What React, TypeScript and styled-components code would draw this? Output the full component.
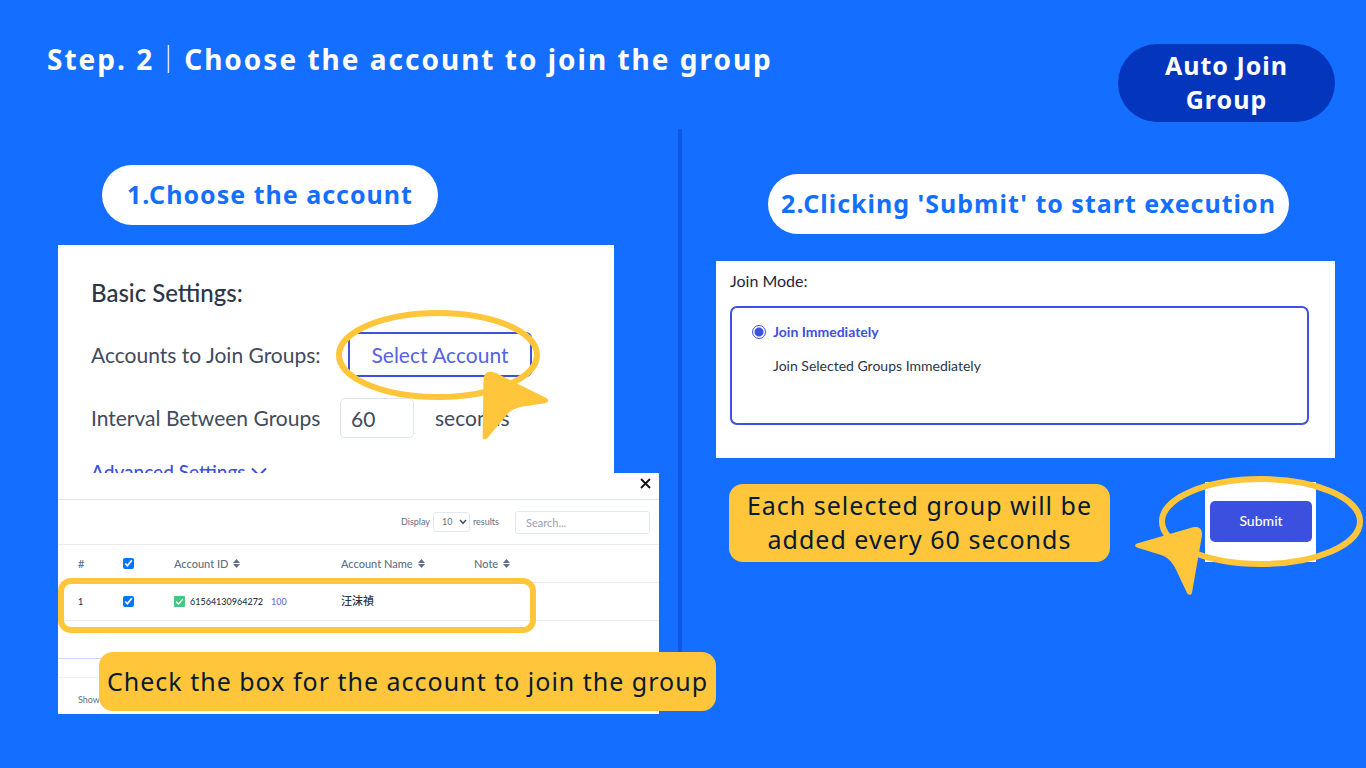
import React from "react";
import styled, { createGlobalStyle } from "styled-components";

const color = {
  page: "#146eff",
  badge: "#0435bd",
  divider: "#0c57e6",
  accent: "#ffc63c",
  ink: "#061a30",
  indigo: "#3d50df",
  text: "#2b3648",
  soft: "#414b5c",
  muted: "#5f6f86",
  line: "#e3e9f0",
};

const display = `"Noto Sans", "Noto Sans CJK SC", sans-serif`;
const ui = `Lato, "Noto Sans CJK TC", sans-serif`;

const GlobalStyle = createGlobalStyle`
  *, *::before, *::after { box-sizing: border-box; }
  body { margin: 0; background: ${color.page}; font-family: ${ui}; color: ${color.text}; }
  h1, h2, p { margin: 0; }
  button, input, select { font: inherit; color: inherit; margin: 0; }
`;

const Page = styled.div`
  min-height: 100vh;
  display: flex;
  flex-direction: column;
  overflow: hidden;
`;

const Header = styled.header`
  display: flex;
  justify-content: space-between;
  align-items: flex-start;
  padding: 44px 31px 0 47px;
`;

const Title = styled.h1`
  font: 700 28px/30px ${display};
  letter-spacing: 2px;
  color: #fff;
`;

const TitleBar = styled.span`
  font-weight: 300;
`;

const Badge = styled.div`
  width: 217px;
  padding: 4px 40px 6px;
  border-radius: 39px;
  background: ${color.badge};
  color: #fff;
  font: 700 25px/34px ${display};
  letter-spacing: 1px;
  text-align: center;
`;

const Columns = styled.main`
  flex: 1;
  display: grid;
  grid-template-columns: 678fr 4px 684fr;
  margin-top: 7px;
`;

const Divider = styled.div`
  background: ${color.divider};
  margin-bottom: 64px;
`;

const LeftColumn = styled.section`
  min-width: 0;
  padding: 36px 19px 54px 58px;
`;

const RightColumn = styled.section`
  min-width: 0;
  padding: 45px 31px 54px 34px;
`;

const Pill = styled.h2<{ $indent: number; $width: number }>`
  display: flex;
  align-items: center;
  justify-content: center;
  width: ${(p) => p.$width}px;
  height: 60px;
  margin-left: ${(p) => p.$indent}px;
  padding-bottom: 2px;
  border-radius: 30px;
  background: #fff;
  color: ${color.page};
  font: 700 25px/34px ${display};
  letter-spacing: 1px;
  white-space: nowrap;
`;

const Callout = styled.p`
  border-radius: 14px;
  background: ${color.accent};
  color: ${color.ink};
  font: 400 25px/34px ${display};
  letter-spacing: 1px;
  text-align: center;
`;

const SettingsCard = styled.div`
  height: 228px;
  margin: 20px 45px 0 0;
  padding: 32px 33px 0;
  overflow: hidden;
  background: #fff;
  color: ${color.soft};
  font-size: 21px;
  line-height: 32px;
`;

const CardHeading = styled.h2`
  color: ${color.text};
  font-size: 24px;
  line-height: 32px;
  font-weight: 500;
`;

const SettingRow = styled.div<{ $top: number; $label: number }>`
  display: flex;
  align-items: center;
  margin-top: ${(p) => p.$top}px;

  & > :first-child {
    flex: 0 0 ${(p) => p.$label}px;
    white-space: nowrap;
  }
`;

const SelectWrap = styled.div`
  position: relative;
`;

const SelectButton = styled.button`
  width: 184px;
  height: 45px;
  padding: 0;
  border: 2px solid ${color.indigo};
  border-radius: 6px;
  background: #fff;
  color: #5563e3;
`;

const Ring = styled.svg`
  position: absolute;
  fill: none;
  stroke: ${color.accent};
  stroke-width: 6;
  pointer-events: none;
`;

const SelectRing = styled(Ring)`
  left: -12px;
  top: -22px;
`;

const SubmitRing = styled(Ring)`
  left: -46px;
  top: -6px;
`;

const Pointer = styled.svg`
  position: absolute;
  fill: ${color.accent};
  pointer-events: none;
  z-index: 2;
`;

const SelectPointer = styled(Pointer)`
  left: 134px;
  top: 39px;
`;

const SubmitPointer = styled(Pointer)`
  left: -70px;
  top: 44px;
`;

const IntervalInput = styled.input`
  width: 74px;
  height: 40px;
  margin: 0 21px 0 0;
  padding: 0 10px;
  border: 1px solid #dde4ee;
  border-radius: 5px;
`;

const AdvancedLink = styled.a`
  display: flex;
  align-items: center;
  gap: 5px;
  margin-top: 18px;
  color: ${color.indigo};
  font-size: 19px;
  font-weight: 500;
  text-decoration: none;
`;

const AccountsCard = styled.div`
  position: relative;
  height: 241px;
  background: #fff;
  color: ${color.muted};
  font-size: 11px;
  line-height: 16px;
`;

const CloseBar = styled.div`
  display: flex;
  justify-content: flex-end;
  align-items: flex-start;
  height: 27px;
  padding: 4px 7px 0;
  border-bottom: 1px solid #d9e4ee;
`;

const CloseButton = styled.button`
  display: flex;
  padding: 0;
  border: 0;
  background: none;
  color: #111;
`;

const Toolbar = styled.div`
  display: flex;
  justify-content: flex-end;
  align-items: center;
  height: 44px;
  padding: 0 9px 0 0;
  font-size: 9px;
`;

const LengthLabel = styled.label`
  display: flex;
  align-items: center;
  gap: 3px;
`;

const LengthBox = styled.span`
  position: relative;
  display: flex;
  align-items: center;

  svg {
    position: absolute;
    right: 3px;
    pointer-events: none;
  }
`;

const LengthSelect = styled.select`
  appearance: none;
  width: 37px;
  height: 20px;
  padding: 0 8px;
  border: 1px solid ${color.line};
  border-radius: 3px;
  background: #fff;
`;

const SearchInput = styled.input`
  width: 135px;
  height: 23px;
  margin-left: 16px;
  padding: 0 10px;
  border: 1px solid ${color.line};
  border-radius: 3px;
  font-size: 11px;

  &::placeholder { color: #98a3b3; opacity: 1; }
`;

const AccountsTable = styled.table`
  width: 100%;
  border-collapse: collapse;
  table-layout: fixed;

  th, td {
    height: 38px;
    padding: 0;
    border-top: 1px solid #e9edf2;
    text-align: left;
    vertical-align: middle;
    font-weight: 500;
    white-space: nowrap;
  }
  th:first-child, td:first-child { padding-left: 20px; }
  td { font-size: 9px; color: ${color.text}; }
  tbody tr:last-child td { border-bottom: 1px solid #e9edf2; }
`;

const Col = styled.col<{ $width: number }>`
  width: ${(p) => p.$width}px;
`;

const CheckBox = styled.input`
  display: block;
  width: 11px;
  height: 11px;
  accent-color: #0075ff;
`;

const CellInner = styled.span`
  display: flex;
  align-items: center;
  gap: 5px;
`;

const AccountCount = styled.a`
  margin-left: 3px;
  color: #6672ea;
  text-decoration: none;
`;

const AccountName = styled.span`
  font-size: 11px;
`;

const TableFooter = styled.div`
  height: 20px;
  margin-top: 37px;
  border-top: 1px solid #c9dcf8;
  border-bottom: 1px solid #eef1f5;
`;

const Summary = styled.p`
  padding: 14px 20px 0;
  font-size: 9px;
`;

const RowHighlight = styled.div`
  position: absolute;
  left: 0;
  top: 105px;
  width: 478px;
  height: 55px;
  border: 6px solid ${color.accent};
  border-radius: 13px;
  pointer-events: none;
`;

const TableCallout = styled(Callout)`
  position: absolute;
  left: 41px;
  top: 179px;
  width: 617px;
  padding: 12px 0 13px;
  white-space: nowrap;
  z-index: 2;
`;

const ModeCard = styled.fieldset`
  min-width: 0;
  height: 197px;
  margin: 27px 0 0;
  padding: 10px 26px 0 14px;
  border: 0;
  background: #fff;
`;

const ModeLegend = styled.legend`
  float: left;
  width: 100%;
  padding: 0;
  color: #1d2838;
  font-size: 16px;
  line-height: 20px;
`;

const ModeOption = styled.div`
  display: grid;
  grid-template-columns: 21px 1fr;
  align-content: start;
  align-items: center;
  row-gap: 14px;
  width: 100%;
  height: 119px;
  margin-top: 15px;
  float: left;
  padding: 14px 20px;
  border: 2px solid ${color.indigo};
  border-radius: 7px;
  font-size: 14px;
  line-height: 20px;

  label { color: ${color.indigo}; font-weight: 700; }
  p { grid-column: 2; }
`;

const Radio = styled.input`
  appearance: none;
  width: 14px;
  height: 14px;
  border: 1px solid ${color.indigo};
  border-radius: 50%;
  background: radial-gradient(circle, ${color.indigo} 4px, #fff 5px);
`;

const SubmitRow = styled.div`
  display: flex;
  align-items: flex-end;
  justify-content: space-between;
  margin-top: 24px;
  padding: 0 19px 0 13px;
`;

const RowCallout = styled(Callout)`
  width: 381px;
  padding: 4px 10px 6px;
`;

const SubmitCard = styled.div`
  position: relative;
  width: 111px;
  height: 80px;
  padding: 19px 4px 0 5px;
  background: #fff;
`;

const SubmitButton = styled.button`
  width: 100%;
  height: 41px;
  padding: 0 0 2px;
  border: 0;
  border-radius: 5px;
  background: #3b50de;
  color: #fff;
  font-size: 14px;
  font-weight: 500;
`;

const SortIcon = () => (
  <svg width="7" height="9" viewBox="0 0 7 9" fill="currentColor" aria-hidden="true">
    <path d="M3.5 0 7 3.900H0Z M3.500 9 0 5.100H7Z" />
  </svg>
);

const VerifiedIcon = () => (
  <svg width="11" height="11" viewBox="0 0 11 11" aria-hidden="true">
    <rect width="11" height="11" rx="1" fill="#42c882" />
    <path d="M2.2 5.7 4.5 8 8.9 3.1" fill="none" stroke="#fff" strokeWidth="1.4" />
  </svg>
);

const columns = ["Account ID", "Account Name", "Note"];

export default function App() {
  return (
    <>
      <GlobalStyle />
      <Page>
        <Header>
          <Title>
            Step. 2<TitleBar>｜</TitleBar>Choose the account to join the group
          </Title>
          <Badge>Auto Join Group</Badge>
        </Header>

        <Columns>
          <LeftColumn>
            <Pill $indent={44} $width={336}>1.Choose the account</Pill>

            <SettingsCard>
              <CardHeading>Basic Settings:</CardHeading>
              <SettingRow $top={23} $label={257}>
                <span>Accounts to Join Groups:</span>
                <SelectWrap>
                  <SelectButton type="button">Select Account</SelectButton>
                  <SelectRing width="204" height="91" viewBox="0 0 204 91">
                    <ellipse cx="102" cy="45" rx="99" ry="42" />
                  </SelectRing>
                  <SelectPointer width="68" height="70" viewBox="0 0 68 70">
                    <path d="M1.5 9C1.5 1.5 7-1.5 14.7 2.3L63 26.3C67.500 28.500 67 31.500 63 32.200L41 35.500C34 37 29 38.500 24.700 44L5.500 67C3.500 69.500 0.500 68.500 0.600 65Z" />
                  </SelectPointer>
                </SelectWrap>
              </SettingRow>
              <SettingRow $top={21} $label={249}>
                <label htmlFor="interval">Interval Between Groups</label>
                <IntervalInput id="interval" defaultValue="60" />
                <span>seconds</span>
              </SettingRow>
              <AdvancedLink href="#advanced">
                Advanced Settings
                <svg width="16" height="10" viewBox="0 0 16 10" fill="none" stroke="currentColor" strokeWidth="2">
                  <path d="M1 1.500 8 8.500 15 1.500" />
                </svg>
              </AdvancedLink>
            </SettingsCard>

            <AccountsCard>
              <CloseBar>
                <CloseButton type="button" aria-label="Close">
                  <svg width="13" height="13" viewBox="0 0 13 13" fill="none" stroke="currentColor" strokeWidth="1.8">
                    <path d="M2 2 11 11M11 2 2 11" />
                  </svg>
                </CloseButton>
              </CloseBar>
              <Toolbar>
                <LengthLabel>
                  Display
                  <LengthBox>
                    <LengthSelect defaultValue="10">
                      <option>10</option>
                    </LengthSelect>
                    <svg width="8" height="6" viewBox="0 0 8 6" fill="none" stroke="#46546a" strokeWidth="1.5">
                      <path d="M1 1 4 4.300 7 1" />
                    </svg>
                  </LengthBox>
                  results
                </LengthLabel>
                <SearchInput type="search" placeholder="Search..." aria-label="Search" />
              </Toolbar>
              <AccountsTable>
                <colgroup>
                  <Col $width={65} />
                  <Col $width={51} />
                  <Col $width={167} />
                  <Col $width={133} />
                  <col />
                </colgroup>
                <thead>
                  <tr>
                    <th>#</th>
                    <th><CheckBox type="checkbox" defaultChecked aria-label="Select all" /></th>
                    {columns.map((name) => (
                      <th key={name}>
                        <CellInner>{name}<SortIcon /></CellInner>
                      </th>
                    ))}
                  </tr>
                </thead>
                <tbody>
                  <tr>
                    <td>1</td>
                    <td><CheckBox type="checkbox" defaultChecked aria-label="Select account 1" /></td>
                    <td>
                      <CellInner>
                        <VerifiedIcon />
                        61564130964272
                        <AccountCount href="#friends">100</AccountCount>
                      </CellInner>
                    </td>
                    <td><AccountName>汪沫禎</AccountName></td>
                    <td />
                  </tr>
                </tbody>
              </AccountsTable>
              <TableFooter />
              <Summary>Show</Summary>
              <RowHighlight />
              <TableCallout>Check the box for the account to join the group</TableCallout>
            </AccountsCard>
          </LeftColumn>

          <Divider />

          <RightColumn>
            <Pill $indent={52} $width={521}>2.Clicking 'Submit' to start execution</Pill>

            <ModeCard>
              <ModeLegend>Join Mode:</ModeLegend>
              <ModeOption>
                <Radio type="radio" name="mode" id="immediate" defaultChecked />
                <label htmlFor="immediate">Join Immediately</label>
                <p>Join Selected Groups Immediately</p>
              </ModeOption>
            </ModeCard>

            <SubmitRow>
              <RowCallout>Each selected group will be added every 60 seconds</RowCallout>
              <SubmitCard>
                <SubmitButton type="button">Submit</SubmitButton>
                <SubmitRing width="204" height="91" viewBox="0 0 204 91">
                  <ellipse cx="102" cy="45.5" rx="99" ry="42.5" />
                </SubmitRing>
                <SubmitPointer width="68" height="70" viewBox="0 0 68 70">
                  <path d="M2 17.500 58 1.300C63.500 0 67.500 2.500 67 9.500L57 66.500C56.500 69.500 53.500 69.500 52 67L41 43.500C37 36 33.500 31.500 26 29L2 21.500C-0.500 20.500-0.500 18.500 2 17.500Z" />
                </SubmitPointer>
              </SubmitCard>
            </SubmitRow>
          </RightColumn>
        </Columns>
      </Page>
    </>
  );
}
